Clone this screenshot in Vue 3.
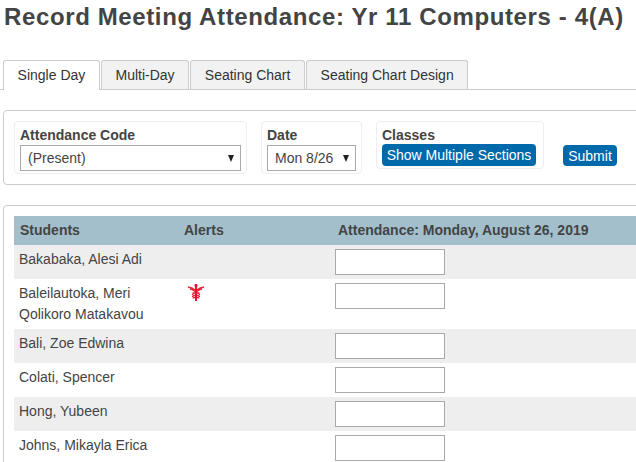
<script setup>
const tabs = ['Single Day', 'Multi-Day', 'Seating Chart', 'Seating Chart Design']
const students = [
  { name: 'Bakabaka, Alesi Adi' },
  { name: 'Baleilautoka, Meri Qolikoro Matakavou', alert: true },
  { name: 'Bali, Zoe Edwina' },
  { name: 'Colati, Spencer' },
  { name: 'Hong, Yubeen' },
  { name: 'Johns, Mikayla Erica' }
]
</script>

<template>
  <div class="page">
    <h1 class="title">Record Meeting Attendance: Yr 11 Computers - 4(A)</h1>
    <nav class="tabs">
      <div v-for="(t, i) in tabs" :key="t" class="tab" :class="{ active: i === 0 }">{{ t }}</div>
    </nav>

    <section class="panel filters">
      <div class="field code">
        <label>Attendance Code</label>
        <div class="select wide">
          <select><option>(Present)</option></select>
          <svg class="arrow" width="6" height="7" viewBox="0 0 6 7"><path d="M0 0H6L3 7Z" /></svg>
        </div>
      </div>
      <div class="field date">
        <label>Date</label>
        <div class="select narrow">
          <select><option>Mon 8/26</option></select>
          <svg class="arrow" width="6" height="7" viewBox="0 0 6 7"><path d="M0 0H6L3 7Z" /></svg>
        </div>
      </div>
      <div class="field classes">
        <label>Classes</label>
        <button class="btn sections">Show Multiple Sections</button>
      </div>
      <button class="btn submit">Submit</button>
    </section>

    <section class="panel roster">
      <div class="row head">
        <div class="c-name">Students</div>
        <div class="c-alert">Alerts</div>
        <div class="c-att">Attendance: Monday, August 26, 2019</div>
      </div>
      <div v-for="s in students" :key="s.name" class="row">
        <div class="c-name">{{ s.name }}</div>
        <div class="c-alert">
          <svg v-if="s.alert" class="caduceus" width="16" height="17" viewBox="0 0 16 17">
            <rect class="solid" x="7" y="0" width="2" height="17" />
            <rect class="solid" x="6.500" y="0.500" width="3" height="2" />
            <path class="feather" d="M0 3C3 3.500 5.500 4.500 7 6M2 4.800C4 5.200 5.500 6 7 7.500M9 6C10.500 4.500 13 3.500 16 3M9 7.500C10.500 6 12 5.200 14 4.800" />
            <path class="coil" d="M4.500 8.700C7 8.700 11.500 9.300 11.500 10.500C11.500 11.700 4.500 11.300 4.500 12.500C4.500 13.700 11 13.300 11 14.500" />
            <path class="coil" d="M11.500 8.700C9 8.700 4.500 9.300 4.500 10.500C4.500 11.700 11.500 11.300 11.500 12.500C11.500 13.700 5 13.300 5 14.500" />
          </svg>
        </div>
        <div class="c-att"><input type="text" /></div>
      </div>
    </section>
  </div>
</template>

<style>
html, body { margin: 0; background: #fff; overflow: hidden; }
</style>

<style scoped>
.page {
  width: 636px;
  height: 462px;
  overflow: hidden;
  font-family: "Liberation Sans", Arial, sans-serif;
  font-size: 14px;
  color: #444;
}
.title {
  margin: 0;
  padding: 3px 0 0 4px;
  height: 57px;
  box-sizing: border-box;
  font-size: 24px;
  line-height: 28px;
  font-weight: 700;
  letter-spacing: 0.62px;
  white-space: nowrap;
}
.tabs {
  display: flex;
  gap: 1px;
  margin-top: 3px;
  padding-left: 3px;
  height: 30px;
  box-sizing: border-box;
  border-bottom: 1px solid #ccc;
}
.tab {
  padding: 0 13.6px;
  height: 29px;
  line-height: 29px;
  box-sizing: border-box;
  border: 1px solid #ccc;
  border-bottom: 0;
  border-radius: 3px 3px 0 0;
  background: #f2f2f2;
  color: #333;
  white-space: nowrap;
}
.tab.active {
  height: 30px;
  background: #fff;
}
.panel {
  box-sizing: border-box;
  width: 700px;
  margin-left: 3px;
  border: 1px solid #ccc;
  border-radius: 4px;
}
.filters {
  margin-top: 20px;
  height: 75px;
  padding: 10px;
  display: flex;
  align-items: flex-start;
}
.field {
  box-sizing: border-box;
  border: 1px solid #eee;
  border-radius: 4px;
  padding: 5px;
}
.field label {
  display: block;
  font-weight: 700;
  line-height: 16px;
  height: 18px;
}
.code { width: 233px; height: 53px; }
.date { width: 101px; height: 53px; margin-left: 14px; }
.classes { width: 168px; height: 48px; margin-left: 14px; }
.select { position: relative; height: 26px; }
.wide { width: 221px; }
.narrow { width: 89px; }
.select select {
  appearance: none;
  width: 100%;
  height: 100%;
  box-sizing: border-box;
  border: 1px solid #aaa;
  border-radius: 0;
  background: #fff;
  color: #444;
  font: 14px "Liberation Sans", Arial, sans-serif;
  padding: 0 0 0 7px;
}
.arrow {
  position: absolute;
  right: 7px;
  top: 10px;
  fill: #222;
  pointer-events: none;
}
.btn {
  border: 0;
  background: #0069aa;
  color: #fff;
  border-radius: 4px;
  font: 14px "Liberation Sans", Arial, sans-serif;
  padding: 0;
  white-space: nowrap;
}
.sections { display: block; width: 154px; height: 22px; margin-top: -1px; }
.submit { width: 54px; height: 21px; margin: 24px 0 0 19px; }
.roster {
  margin-top: 20px;
  padding: 10px;
  height: 300px;
}
.row {
  display: flex;
  align-items: flex-start;
  min-height: 34px;
  width: 660px;
  line-height: 21px;
}
.row:nth-child(even) { background: #eee; }
.row.head {
  background: #a3bfcc;
  min-height: 29px;
  line-height: 29px;
  font-weight: 700;
  font-size: 14px;
}
.c-name { width: 165px; box-sizing: border-box; padding: 4px 5px; flex: none; }
.c-alert { width: 156px; box-sizing: border-box; padding: 4px 9px; flex: none; }
.c-att { flex: 1; padding-top: 4px; }
.head .c-name { padding: 0 6px; }
.head .c-alert { padding: 0 5px; }
.head .c-att { padding: 0 3px; }
.caduceus { display: block; margin: 1px 0 0 0; }
.solid { fill: #e8112d; }
.feather { fill: none; stroke: #ee1c2e; stroke-width: 1.3; }
.coil { fill: none; stroke: #e8112d; stroke-width: 1.1; }
input {
  display: block;
  width: 110px;
  height: 26px;
  box-sizing: border-box;
  border: 1px solid #aaa;
  background: #fff;
  padding: 0;
  margin: 0;
}
</style>
